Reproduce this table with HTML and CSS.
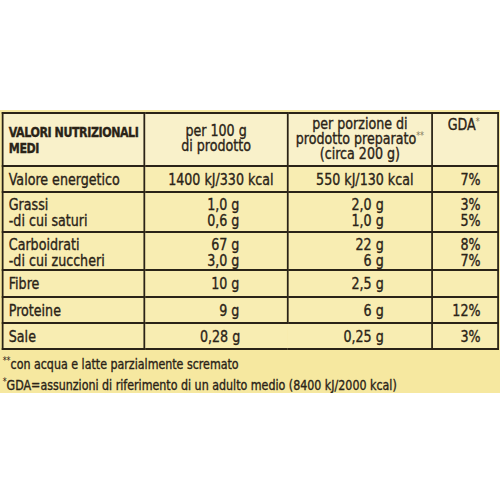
FILE: index.html
```html
<!DOCTYPE html>
<html lang="it">
<head>
  <meta charset="UTF-8">
  <title>Valori nutrizionali</title>
  <link rel="stylesheet" href="styles.css">
</head>
<body>
  <div class="label">
    <div class="squeeze">
      <table class="nutri">
        <colgroup>
          <col class="c-name">
          <col class="c-100">
          <col class="c-porz">
          <col class="c-gda">
        </colgroup>
        <tr class="head">
          <th class="name">VALORI NUTRIZIONALI<br>MEDI</th>
          <th class="mid">per 100 g<br>di prodotto</th>
          <th class="top">per porzione di<br>prodotto preparato<sup>**</sup><br>(circa 200 g)</th>
          <th class="top gda">GDA<sup>*</sup></th>
        </tr>
        <tr class="r-energy">
          <td>Valore energetico</td>
          <td class="center">1400 kJ/330 kcal</td>
          <td class="center">550 kJ/130 kcal</td>
          <td class="pct">7%</td>
        </tr>
        <tr class="r-double r-fat">
          <td>Grassi<br>-di cui saturi</td>
          <td class="val">1,0 g<br>0,6 g</td>
          <td class="val">2,0 g<br>1,0 g</td>
          <td class="pct">3%<br>5%</td>
        </tr>
        <tr class="r-double r-carbo">
          <td>Carboidrati<br>-di cui zuccheri</td>
          <td class="val">67 g<br>3,0 g</td>
          <td class="val">22 g<br>6 g</td>
          <td class="pct">8%<br>7%</td>
        </tr>
        <tr class="r-fibre">
          <td>Fibre</td>
          <td class="val">10 g</td>
          <td class="val">2,5 g</td>
          <td class="pct"></td>
        </tr>
        <tr class="r-single">
          <td>Proteine</td>
          <td class="val">9 g</td>
          <td class="val">6 g</td>
          <td class="pct">12%</td>
        </tr>
        <tr class="r-single r-sale">
          <td>Sale</td>
          <td class="val">0,28 g</td>
          <td class="val open">0,25 g</td>
          <td class="pct">3%</td>
        </tr>
      </table>
      <div class="notes">
        <p><sup>**</sup>con acqua e latte parzialmente scremato</p>
        <p><sup>*</sup>GDA=assunzioni di riferimento di un adulto medio (8400 kJ/2000 kcal)</p>
      </div>
    </div>
  </div>
</body>
</html>
```

FILE: styles.css
```css
body {
  margin: 0;
  padding-top: 110px;
  background: #fff;
  font-family: "DejaVu Sans Condensed", "Liberation Sans", sans-serif;
  color: #2a2317;
}
.label {
  width: 500px;
  height: 283px;
  overflow: hidden;
  background-color: #f6e8a0;
}
/* the printed label uses a condensed face: lay out wide, squeeze horizontally */
.squeeze {
  width: 568px;
  padding-top: 2px;
  transform: scaleX(0.88);
  transform-origin: 0 0;
  -webkit-text-stroke: 0.35px #2a2317;
}
.nutri {
  border-collapse: collapse;
  margin-left: 2px;
  width: 563px;
  table-layout: fixed;
  font-size: 16px;
  line-height: 15px;
}
.c-name { width: 161px; }
.c-100 { width: 163px; }
.c-porz { width: 164px; }
.c-gda { width: 75px; }
.nutri th,
.nutri td {
  border: 2.5px solid #2a2317;
  padding: 0;
  background-color: #f8edb2;
}
.head { height: 53px; }
.head th {
  font-weight: normal;
  background-color: #f9f1ca;
  vertical-align: middle;
}
.head th.name {
  text-align: left;
  padding-left: 6px;
  font-size: 14px;
  letter-spacing: -0.5px;
  line-height: 16px;
  font-weight: bold;
}
.head th.mid {
  text-align: center;
  padding-bottom: 3px;
}
.head th.top {
  vertical-align: top;
  text-align: center;
  padding-top: 2px;
}
.head th.gda {
  text-align: right;
  padding-right: 20px;
  padding-top: 3px;
}
sup {
  font-size: 10px;
  line-height: 0;
  vertical-align: 5px;
  color: #857a5e;
  -webkit-text-stroke: 0;
}
.nutri td:first-child {
  padding-left: 6px;
}
.nutri td.center {
  text-align: center;
  padding-left: 11px;
}
.nutri td.val {
  text-align: right;
  padding-right: 54px;
}
.nutri td.pct {
  text-align: right;
  padding-right: 19px;
}
.r-energy { height: 26px; }
.r-fat { height: 40px; }
.r-carbo { height: 38px; }
.r-fibre { height: 27px; }
.r-single { height: 26px; }
.r-double td {
  vertical-align: top;
  padding-top: 4px;
  line-height: 15.5px;
}
.r-sale td.open { border-left-style: hidden; }
.r-sale td:nth-child(2) { border-right-style: hidden; }
.notes {
  padding-left: 3px;
  margin-top: 4px;
  font-size: 14px;
  line-height: 21px;
}
.notes p {
  margin: 0;
}
.notes sup {
  color: #2a2317;
}
```
